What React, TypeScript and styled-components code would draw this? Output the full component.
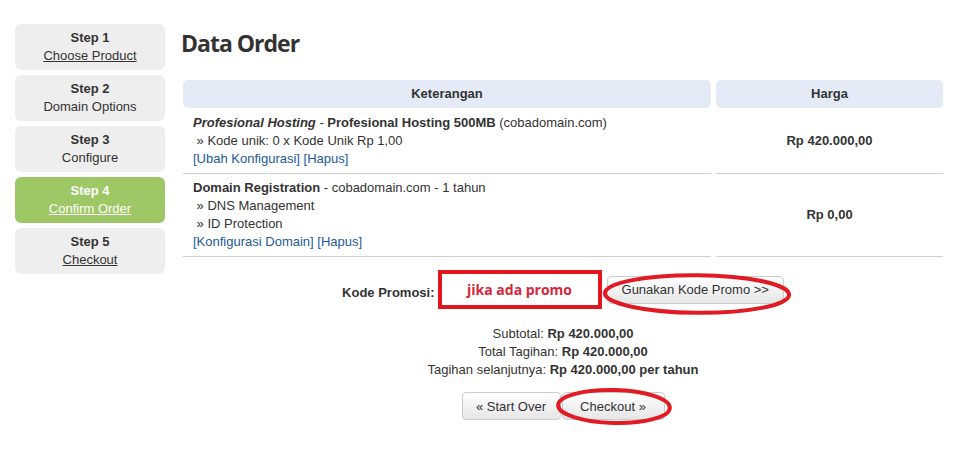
import React from "react";
import styled, { createGlobalStyle } from "styled-components";

const GlobalStyle = createGlobalStyle`
  body {
    margin: 0;
    background: #ffffff;
    font-family: "Liberation Sans", Arial, sans-serif;
    color: #333333;
  }
`;

const steps = [
  { title: "Step 1", label: "Choose Product", link: true },
  { title: "Step 2", label: "Domain Options", link: false },
  { title: "Step 3", label: "Configure", link: false },
  { title: "Step 4", label: "Confirm Order", link: true, active: true },
  { title: "Step 5", label: "Checkout", link: true },
];

function Ellipse({ rotate = -1 }: { rotate?: number }) {
  return (
    <Ring viewBox="0 0 100 40" preserveAspectRatio="none">
      <ellipse
        cx="50"
        cy="20"
        rx="49"
        ry="18.8"
        fill="none"
        stroke="#e01b24"
        strokeWidth="4"
        vectorEffect="non-scaling-stroke"
        transform={`rotate(${rotate} 50 20)`}
      />
    </Ring>
  );
}

function App() {
  return (
    <>
      <GlobalStyle />
      <Page>
        <Sidebar>
          {steps.map((s) => (
            <StepBox key={s.title} $active={s.active}>
              <StepTitle>{s.title}</StepTitle>
              <StepLabel $link={s.link}>{s.label}</StepLabel>
            </StepBox>
          ))}
        </Sidebar>
        <Main>
          <Title>Data Order</Title>
          <OrderTable>
            <HeadCell>Keterangan</HeadCell>
            <HeadCell>Harga</HeadCell>

            <DescCell>
              <div>
                <em>Profesional Hosting</em> - <strong>Profesional Hosting 500MB</strong> (cobadomain.com)
              </div>
              <div>&nbsp;» Kode unik: 0 x Kode Unik Rp 1,00</div>
              <LinkRow>[Ubah Konfigurasi] [Hapus]</LinkRow>
            </DescCell>
            <PriceCell>Rp 420.000,00</PriceCell>

            <DescCell>
              <div>
                <strong>Domain Registration</strong> - cobadomain.com - 1 tahun
              </div>
              <div>&nbsp;» DNS Management</div>
              <div>&nbsp;» ID Protection</div>
              <LinkRow>[Konfigurasi Domain] [Hapus]</LinkRow>
            </DescCell>
            <PriceCell>Rp 0,00</PriceCell>
          </OrderTable>

          <PromoRow>
            <PromoLabel>Kode Promosi:</PromoLabel>
            <PromoBox>jika ada promo</PromoBox>
            <Marked $w={188} $h={40} $l={-4} $t={-2}>
              <Button>Gunakan Kode Promo &gt;&gt;</Button>
              <Ellipse rotate={1} />
            </Marked>
          </PromoRow>

          <Totals>
            <div>
              Subtotal: <strong>Rp 420.000,00</strong>
            </div>
            <div>
              Total Tagihan: <strong>Rp 420.000,00</strong>
            </div>
            <div>
              Tagihan selanjutnya: <strong>Rp 420.000,00 per tahun</strong>
            </div>
          </Totals>

          <Actions>
            <Button $w={99}>« Start Over</Button>
            <Marked $w={114} $h={35} $l={-5} $t={-3}>
              <Button $w={103}>Checkout »</Button>
              <Ellipse rotate={2} />
            </Marked>
          </Actions>
        </Main>
      </Page>
    </>
  );
}

const Page = styled.div`
  display: flex;
  align-items: flex-start;
  gap: 18px;
  padding: 24px 20px 0 15px;
  width: 961px;
  height: 452px;
  box-sizing: border-box;
`;

const Sidebar = styled.div`
  width: 150px;
  flex-shrink: 0;
  display: flex;
  flex-direction: column;
  gap: 5px;
`;

const StepBox = styled.div<{ $active?: boolean }>`
  height: 46px;
  box-sizing: border-box;
  padding: 5px 0;
  border-radius: 6px;
  background: ${(p) => (p.$active ? "#9ec866" : "#eeeeee")};
  color: ${(p) => (p.$active ? "#ffffff" : "#333333")};
  text-align: center;
  font-size: 13px;
  line-height: 18px;
`;

const StepTitle = styled.div`
  font-weight: 700;
`;

const StepLabel = styled.div<{ $link?: boolean }>`
  text-decoration: ${(p) => (p.$link ? "underline" : "none")};
`;

const Main = styled.div`
  flex: 1;
  display: flex;
  flex-direction: column;
`;

const Title = styled.h1`
  margin: 4px 0 0 -2px;
  font-family: "Open Sans", sans-serif;
  font-weight: 700;
  font-size: 23px;
  line-height: 30px;
  letter-spacing: -1px;
  color: #333333;
`;

const OrderTable = styled.div`
  margin-top: 22px;
  display: grid;
  grid-template-columns: 528px 227px;
  column-gap: 5px;
  font-size: 13px;
  line-height: 18px;
`;

const HeadCell = styled.div`
  height: 28px;
  line-height: 28px;
  background: #e4ebf6;
  border-radius: 5px;
  text-align: center;
  font-weight: 700;
  margin-bottom: 1px;
`;

const DescCell = styled.div`
  padding: 5px 10px;
  border-bottom: 1px solid #cfcfcf;

  em {
    font-weight: 700;
  }
`;

const PriceCell = styled.div`
  display: flex;
  align-items: center;
  justify-content: center;
  border-bottom: 1px solid #cfcfcf;
  font-weight: 700;
`;

const LinkRow = styled.div`
  color: #22599a;
`;

const PromoRow = styled.div`
  margin-top: 13px;
  display: flex;
  align-items: center;
  justify-content: center;
  font-size: 13px;
`;

const PromoLabel = styled.span`
  font-weight: 700;
  margin-right: 3px;
  margin-top: 6px;
`;

const PromoBox = styled.div`
  width: 164px;
  height: 39px;
  box-sizing: border-box;
  border: 4px solid #e3161f;
  margin-right: 5px;
  display: flex;
  align-items: center;
  justify-content: center;
  font-family: "Open Sans", sans-serif;
  font-weight: 700;
  font-size: 14px;
  color: #d7263b;
`;

const Marked = styled.div<{ $w: number; $h: number; $l: number; $t: number }>`
  position: relative;

  svg {
    left: ${(p) => p.$l}px;
    top: ${(p) => p.$t}px;
    width: ${(p) => p.$w}px;
    height: ${(p) => p.$h}px;
  }
`;

const Ring = styled.svg`
  position: absolute;
  overflow: visible;
  pointer-events: none;
`;

const Button = styled.button<{ $w?: number }>`
  ${(p) => (p.$w ? `width: ${p.$w}px;` : "padding: 0 14px;")}
  height: 28px;
  border: 1px solid #cccccc;
  border-radius: 4px;
  background: linear-gradient(#ffffff, #e6e6e6);
  font-family: "Liberation Sans", Arial, sans-serif;
  font-size: 13px;
  color: #333333;
`;

const Totals = styled.div`
  margin-top: 16px;
  text-align: center;
  font-size: 13px;
  line-height: 18px;
`;

const Actions = styled.div`
  margin-top: 13px;
  display: flex;
  justify-content: center;
  gap: 1px;
`;

export default App;
